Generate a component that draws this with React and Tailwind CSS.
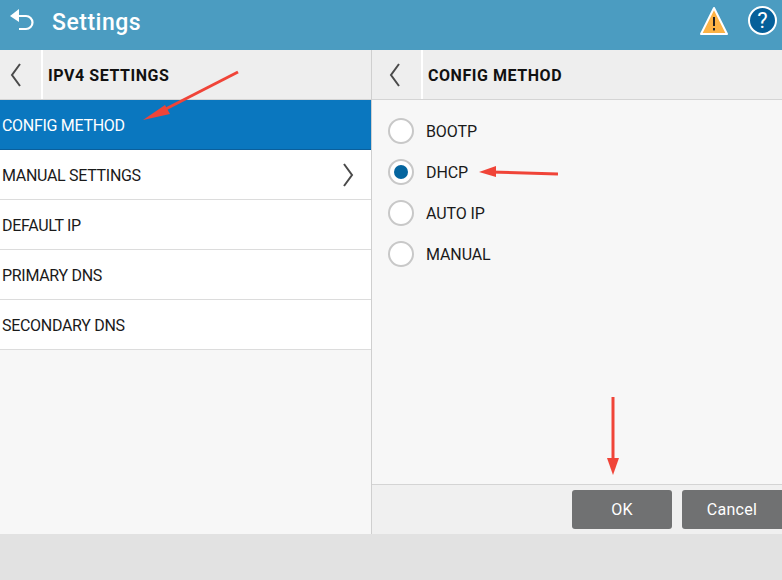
import React from "react";

const font = { fontFamily: 'Roboto, "Noto Sans", sans-serif' };

function Row({ label, active, chevron }) {
  return (
    <div
      className={`h-[50px] flex items-center justify-between pl-[2px] pr-[16px] border-b text-[16px] tracking-[-0.3px] ${
        active ? "bg-[#0a77bf] text-white border-[#0a5f9c]" : "bg-white text-[#1a1a1a] border-[#dcdcdc]"
      }`}
    >
      <span className="pt-[2px]">{label}</span>
      {chevron && <Chev dir="right" />}
    </div>
  );
}

function Chev({ dir }) {
  return (
    <svg width="14" height="26" viewBox="0 0 14 26" fill="none" stroke="#4a4a4a" strokeWidth="2">
      <path d={dir === "left" ? "M11 2 L3 13 L11 24" : "M3 2 L11 13 L3 24"} />
    </svg>
  );
}

function SubHeader({ title, backWidth }) {
  return (
    <div className="h-[50px] flex bg-[#eeeeee] border-b border-[#d4d4d4]">
      <div className={`${backWidth} flex items-center justify-center pr-[10px]`}>
        <Chev dir="left" />
      </div>
      <div className="w-[2px] bg-white" />
      <div className="flex items-center pl-[5px] pt-[2px] font-bold text-[16px] tracking-[0.55px] text-[#111]">{title}</div>
    </div>
  );
}

function Radio({ label, checked }) {
  return (
    <div className="h-[41px] flex items-center gap-[12px] pl-[16px]">
      <div className="w-[26px] h-[26px] rounded-full bg-white border-2 border-[#c8c8c8] flex items-center justify-center">
        {checked && <div className="w-[14px] h-[14px] rounded-full bg-[#05659f]" />}
      </div>
      <span className="pt-[2px] text-[16px] tracking-[-0.1px] text-[#1a1a1a]">{label}</span>
    </div>
  );
}

function RedArrow({ className, x1, y1, x2, y2, w, h, head }) {
  return (
    <svg className={`absolute ${className}`} width={w} height={h} viewBox={`0 0 ${w} ${h}`}>
      <line x1={x1} y1={y1} x2={x2} y2={y2} stroke="#f04438" strokeWidth="3" />
      <polygon points={head} fill="#f04438" />
    </svg>
  );
}

export default function App() {
  return (
    <div className="relative w-[782px] h-[580px] bg-[#e2e2e2] overflow-hidden" style={font}>
      <div className="h-[50px] bg-[#4b9cc1] flex items-center pl-[10px] pr-[5px]">
        <svg className="mb-[11px]" width="24" height="22" viewBox="0 0 24 22" fill="none" stroke="white" strokeWidth="2.2">
          <path d="M3 7 H16 A6.5 6.5 0 0 1 16 20 H9" />
          <polygon points="0,7 9,0 9,13" fill="white" stroke="none" />
        </svg>
        <span className="ml-[18px] text-[23px] font-medium tracking-[0.5px] text-white mb-[3px]">Settings</span>
        <div className="ml-auto flex items-center gap-[20px] mb-[9px]">
          <svg width="30" height="30" viewBox="0 0 30 30">
            <path d="M16 2 L29 28 H3 Z" fill="#fdb345" stroke="white" strokeWidth="2" strokeLinejoin="round" />
            <rect x="15" y="11" width="2" height="9" fill="#222" />
            <rect x="15" y="22" width="2" height="2.4" fill="#222" />
          </svg>
          <div className="w-[29px] h-[29px] rounded-full bg-[#05609a] border-2 border-white flex items-center justify-center text-white text-[22px]">
            ?
          </div>
        </div>
      </div>

      <div className="flex h-[484px]">
        <div className="w-[372px] flex flex-col bg-[#f7f7f7] border-r border-[#cfcfcf]">
          <SubHeader title="IPV4 SETTINGS" backWidth="w-[41px]" />
          <Row label="CONFIG METHOD" active />
          <Row label="MANUAL SETTINGS" chevron />
          <Row label="DEFAULT IP" />
          <Row label="PRIMARY DNS" />
          <Row label="SECONDARY DNS" />
        </div>
        <div className="flex-1 flex flex-col bg-[#f7f7f7]">
          <SubHeader title="CONFIG METHOD" backWidth="w-[49px] pl-[6px]" />
          <div className="flex-1 pt-[10px]">
            <Radio label="BOOTP" />
            <Radio label="DHCP" checked />
            <Radio label="AUTO IP" />
            <Radio label="MANUAL" />
          </div>
          <div className="h-[50px] bg-[#f0f0f0] border-t border-[#d4d4d4] flex items-center justify-end gap-[10px]">
            <button className="w-[100px] h-[39px] rounded-[3px] bg-[#707172] text-white text-[16px] tracking-[0.3px]">OK</button>
            <button className="w-[100px] h-[39px] rounded-l-[3px] bg-[#707172] text-white text-[16px] tracking-[0.3px]">Cancel</button>
          </div>
        </div>
      </div>

      <RedArrow className="left-[140px] top-[68px]" w={102} h={56} x1={98} y1={4} x2={14} y2={47} head="3,52 25,37 30,46" />
      <RedArrow className="left-[478px] top-[164px]" w={82} h={16} x1={80} y1={10} x2={12} y2={8} head="1,8 18,2 18,13" />
      <RedArrow className="left-[606px] top-[396px]" w={14} h={80} x1={7} y1={1} x2={7} y2={66} head="7,79 1,62 13,62" />
    </div>
  );
}
